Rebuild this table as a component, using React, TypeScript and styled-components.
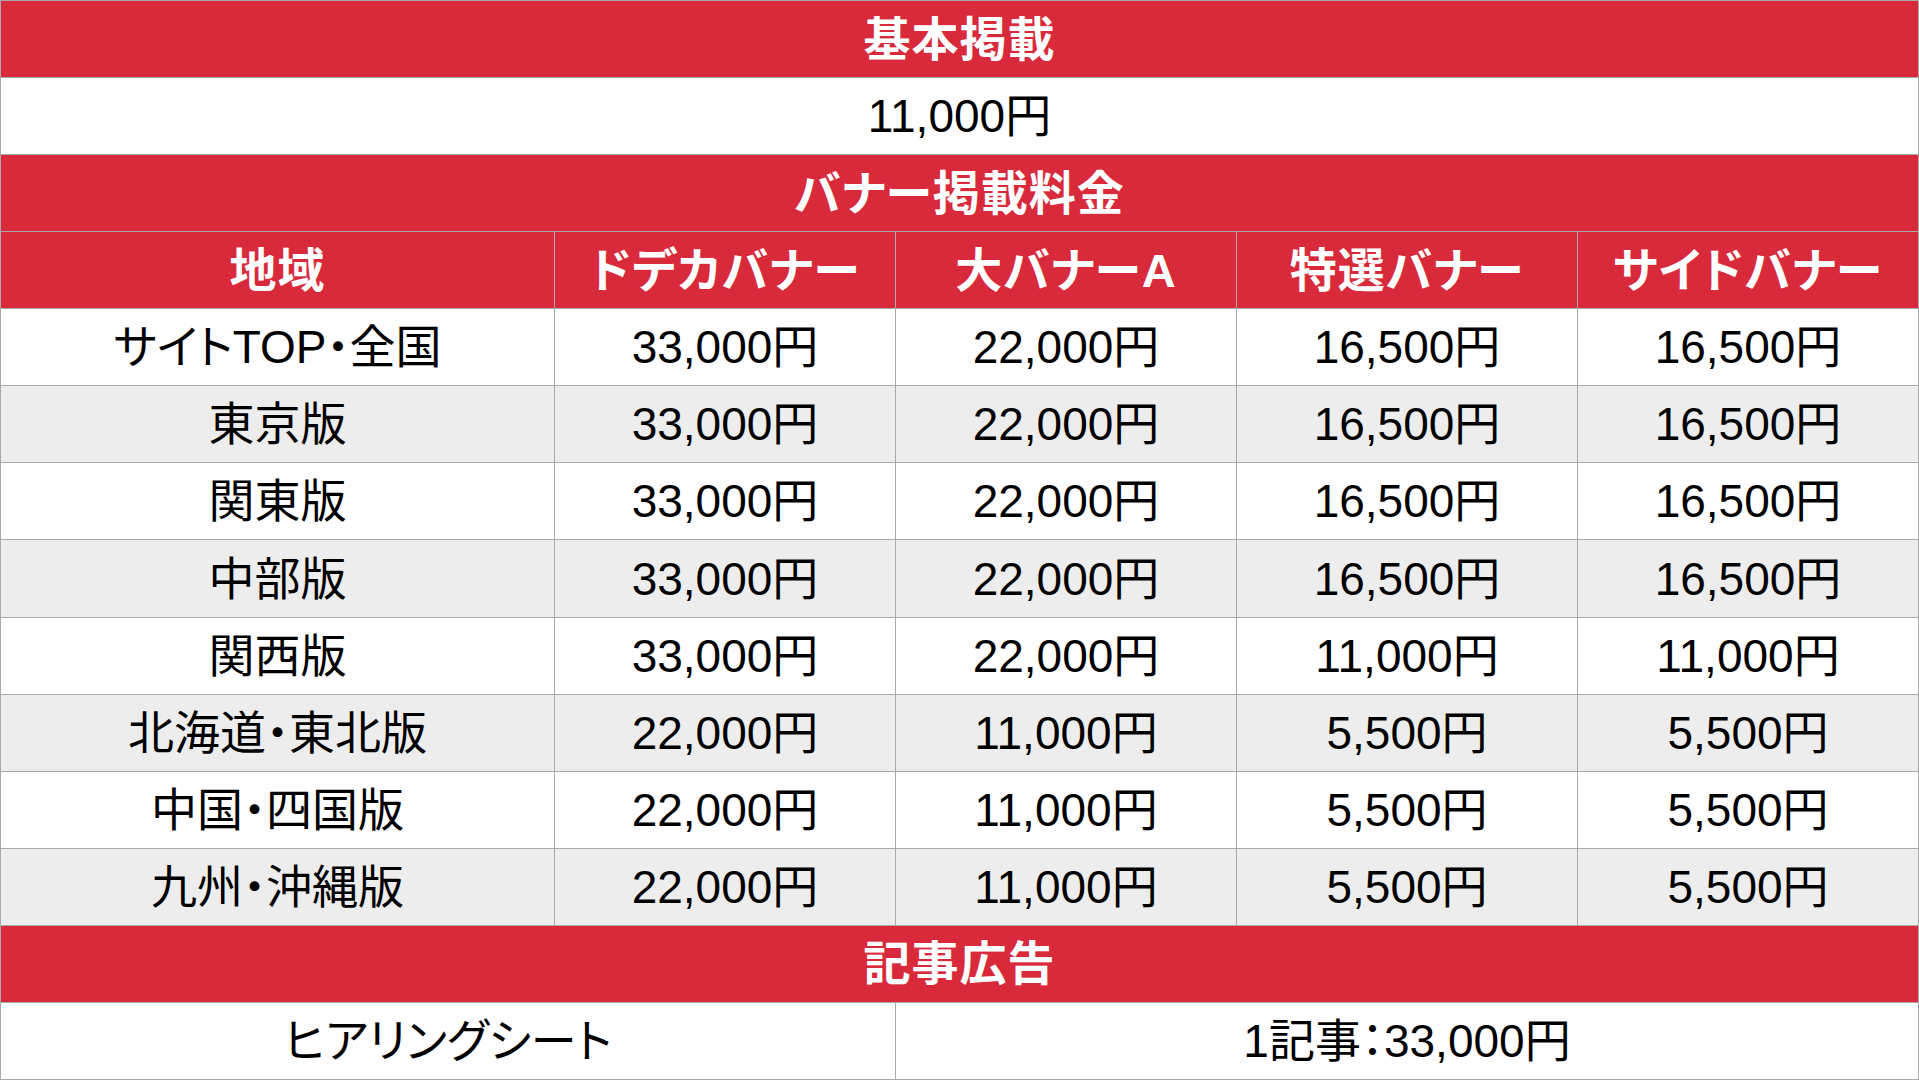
import React from 'react';
import styled, { createGlobalStyle } from 'styled-components';

const GlobalStyle = createGlobalStyle`
  html, body {
    margin: 0;
    padding: 0;
    background: #ffffff;
  }
`;

const Sheet = styled.div`
  box-sizing: border-box;
  width: 1919px;
  height: 1080px;
  display: grid;
  grid-template-columns: 553px repeat(4, 1fr);
  grid-template-rows: repeat(14, 1fr);
  gap: 1px;
  padding: 1px;
  background: #a9a9a9;
  font-family: "Liberation Sans", "Noto Sans CJK JP", sans-serif;
  font-feature-settings: "palt";
`;

const Cell = styled.div<{ $span?: number; $tone?: 'red' | 'white' | 'grey' }>`
  grid-column: span ${(p) => p.$span ?? 1};
  display: flex;
  align-items: center;
  justify-content: center;
  font-size: ${(p) => (p.$tone === 'red' ? '47px' : '46px')};
  line-height: 1;
  white-space: nowrap;
  letter-spacing: ${(p) => (p.$tone === 'red' ? '1px' : '0')};
  background: ${(p) =>
    p.$tone === 'red' ? '#d82a3b' : p.$tone === 'grey' ? '#ededed' : '#ffffff'};
  color: ${(p) => (p.$tone === 'red' ? '#ffffff' : '#000000')};
  font-weight: ${(p) => (p.$tone === 'red' ? 700 : 400)};
`;

const headers = ['地域', 'ドデカバナー', '大バナーA', '特選バナー', 'サイドバナー'];

const rows: [string, string, string, string, string][] = [
  ['サイトTOP・全国', '33,000円', '22,000円', '16,500円', '16,500円'],
  ['東京版', '33,000円', '22,000円', '16,500円', '16,500円'],
  ['関東版', '33,000円', '22,000円', '16,500円', '16,500円'],
  ['中部版', '33,000円', '22,000円', '16,500円', '16,500円'],
  ['関西版', '33,000円', '22,000円', '11,000円', '11,000円'],
  ['北海道・東北版', '22,000円', '11,000円', '5,500円', '5,500円'],
  ['中国・四国版', '22,000円', '11,000円', '5,500円', '5,500円'],
  ['九州・沖縄版', '22,000円', '11,000円', '5,500円', '5,500円'],
];

const App: React.FC = () => (
  <>
    <GlobalStyle />
    <Sheet>
      <Cell $span={5} $tone="red">基本掲載</Cell>
      <Cell $span={5}>11,000円</Cell>
      <Cell $span={5} $tone="red">バナー掲載料金</Cell>
      {headers.map((h) => (
        <Cell key={h} $tone="red">{h}</Cell>
      ))}
      {rows.map((row, i) =>
        row.map((v, j) => (
          <Cell key={`${i}-${j}`} $tone={i % 2 === 1 ? 'grey' : 'white'}>
            {v}
          </Cell>
        ))
      )}
      <Cell $span={5} $tone="red">記事広告</Cell>
      <Cell $span={2}>ヒアリングシート</Cell>
      <Cell $span={3}>1記事：33,000円</Cell>
    </Sheet>
  </>
);

export default App;
